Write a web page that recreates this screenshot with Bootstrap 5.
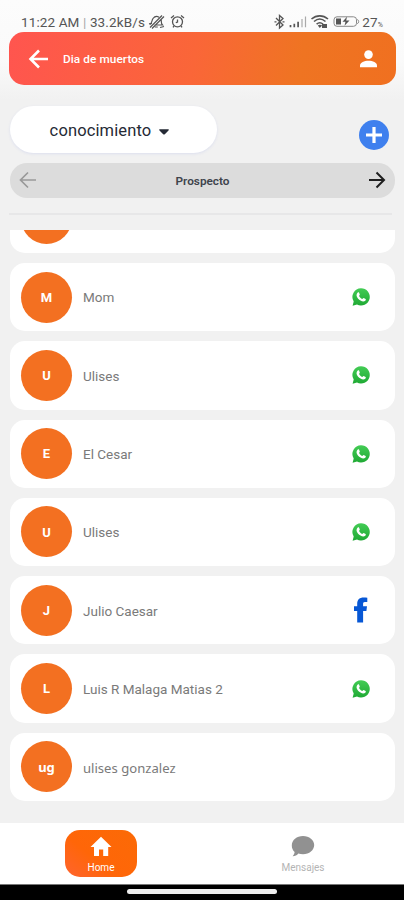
<!DOCTYPE html>
<html lang="es">
<head>
<meta charset="utf-8">
<meta name="viewport" content="width=device-width, initial-scale=1">
<title>Dia de muertos</title>
<link href="https://cdn.jsdelivr.net/npm/bootstrap@5.3.0/dist/css/bootstrap.min.css" rel="stylesheet">
<style>
body{font-family:Roboto,"Liberation Sans",sans-serif;background:#f1f1f1;height:900px;overflow:hidden}
svg{display:block;flex:none}
.phone{width:404px;height:900px}
.top-area{background:linear-gradient(#fcfcfc 0,#fafafa 60px,#f1f1f1 100px)}
.status{height:32px;padding:13px 21px 0;font-size:13.5px;line-height:19px;color:#555}
.status .clock{white-space:nowrap;letter-spacing:.12px}
.battery-text{margin-left:-3px}
.battery-text small{font-size:7px}
.app-head{height:53px;margin:0 8px 0 9px;padding:0 18px 0 17px;border-radius:15px;background:linear-gradient(100deg,#ff554f 0,#fa6638 48%,#ef7422 75%,#f07020 100%);color:#fff}
.app-title{font-size:11.8px;font-weight:500;margin-left:12px;padding-top:2px;letter-spacing:.08px}
.filters{height:78px;padding:21px 15px 0 10px}
.picker{width:207px;height:47px;background:#fff;border:0;border-radius:24px;box-shadow:0 1px 3px #dcdfee;font-size:16.5px;color:#252a35;gap:8px;letter-spacing:.13px}
.add{width:30px;height:30px;margin-top:14px;background:#3f80ee}
.stage{height:35px;margin:0 9px 0 10px;padding:0 9px;border-radius:17px;background:#dcdcdc;font-size:11.8px;font-weight:600;color:#40444c}
.stage span{padding-top:2px}
.rule{height:2px;margin:15px 12px 15px 9px;background:#e7e7e8}
.contacts{height:594px;padding:0 9px 0 10px;gap:10px}
.contact{height:68.3px;flex:none;background:#fff;border-radius:15px;padding:0 25px 0 11px}
.contact.cut{height:23px;border-radius:0 0 15px 15px;overflow:hidden;align-items:flex-end!important;padding-bottom:9px}
.avatar{width:51px;height:51px;flex:none;background:#f37021;color:#fff;font-size:13px;font-weight:700;padding-top:1px}
.who{margin-left:11px;font-size:13.5px;color:#7a7a7a;padding-top:1px}
.noto{font-family:"Noto Sans",sans-serif}
.who.noto{font-size:13.1px;padding-top:3px}
.tabs{height:61px;background:#fff}
.tab{width:72px;height:47px;margin-top:7px;border-radius:15px;font-size:10px;line-height:12px;color:#b4b4b4;padding-top:6px;gap:5px}
.tab.on{background:linear-gradient(40deg,#ff642f,#ff6608 40%,#fb6a06);color:#fff}
.gesture{height:16px;background:#000;border-top:1px solid #777;padding-top:4px}
.pill{width:150px;height:4.5px;background:#eee}
</style>
</head>
<body>
<svg width="0" height="0" aria-hidden="true">
<defs><linearGradient id="wag" x1="0" y1="0" x2="0" y2="1"><stop stop-color="#43cc55"/><stop offset="1" stop-color="#1fa934"/></linearGradient></defs>
<symbol id="wa" viewBox="0 0 18 18"><path fill="url(#wag)" d="M9 .2a8.700 8.700 0 1 1-4 16.400L.6 17.800l1.100-4.400A8.700 8.700 0 0 1 9 .2Z"/><path fill="#fff" d="M5.800 4.400c.4-.4 1-.3 1.200.1l.8 1.900c.1.500-.8 1.200-.7 1.500.7 1.400 1.700 2.400 3.100 3 .4.100 1-1.100 1.500-.9l1.900.9c.4.200.2 1.300-.3 1.800-1.300 1.200-3 .9-4.800-.1-1.800-1.100-3.200-2.600-3.800-4.300-.4-1.500.1-3.100 1.100-3.900Z"/></symbol>
</svg>
<div class="phone d-flex flex-column">
<div class="top-area">
<div class="status d-flex justify-content-between">
<div class="d-flex"><span class="clock">11:22 AM <span class="opacity-50">|</span> 33.2kB/s</span>
<svg width="17" height="17" viewBox="0 -1 17 17" style="margin-left:3px" fill="none" stroke="#555" stroke-width="1.200"><path d="M2 10.500c2-1.500 1.700-4 3-6 1.500-2 4-2.700 6-1.200M13 5c.8 2-.5 4 1.500 6H6.500M6.800 13h3M2 13.500 14 1.500M4 14.500 16 2.500M1 9.800l3-.5M12 13.500l4-1"/></svg>
<svg width="15" height="17" viewBox="0 -1 15 17" style="margin-left:5px" fill="none" stroke="#555" stroke-width="1.300"><circle cx="7.500" cy="7.800" r="5"/><path d="M1 4 4 1.500M14 4l-3-2.500M7.500 5.500V8l-1.700.7M4 12l-1 1.400M11 12l1 1.400"/></svg></div>
<div class="d-flex">
<svg width="91" height="18" viewBox="0 0 91 18" fill="none" stroke="#555"><path stroke-width="1.300" d="m2 5 7 7-3.500 3V2.500L9 5.500l-7 7M.5 8.800h2M8.500 8.800h2"/><path stroke-width="1.700" d="M16.500 12v2.300M20.300 10.700v3.600M24.100 8.700v5.600"/><path stroke="#aaa" stroke-width="1.200" d="M28 6v8.300M31.500 3.500v10.800"/><g stroke-width="1.600"><path d="M37.500 6c5-4.200 11.500-4.200 16.500 0M40 8.500c3.500-3 8-3 11.500 0M42.600 11.100c2-1.700 4.400-1.700 6.400 0"/></g><path fill="#555" stroke="none" d="m43.800 12.500 2 2.500 2.300-2.500c-1.300-1-3-1-4.300 0ZM48 11h5v4h-5Z"/><rect x="60" y="3.800" width="22.500" height="9.500" rx="3" stroke="#888"/><path stroke="#888" d="M83.200 6.500c2 .5 2 3.700 0 4.200"/><path fill="#555" stroke="none" d="M62 5.600h5v6h-5ZM73 3.800l-4.500 5h3l-1 4 5-5.400h-3.300Z"/></svg>
<span class="clock battery-text">27<small>%</small></span></div>
</div>
<header class="app-head d-flex align-items-center">
<svg width="25" height="22" viewBox="0 0 25 22" fill="none" stroke="#fff" stroke-width="2.600"><path d="M22 11H5M13 2.500 4.500 11l8.500 8.500"/></svg>
<span class="app-title">Dia de muertos</span>
<svg class="ms-auto" width="19" height="18" viewBox="0 0 19 18" fill="#fff"><circle cx="9.500" cy="4.600" r="4.300"/><path d="M1 17.300v-1.800c0-6.500 17-6.500 17 0v1.800Z"/></svg>
</header>
<div class="filters d-flex justify-content-between">
<button class="picker d-flex align-items-center justify-content-center pt-1 pb-0 ps-0 pe-2">conocimiento <svg width="10" height="6" viewBox="0 0 10 6"><path fill="#252a35" d="M1 .3h8c.8 0 1 .6.5 1.100L5.800 5.200q-.8.800-1.600 0L.5 1.400C0 .9.200.3 1 .3Z"/></svg></button>
<button class="add border-0 rounded-circle p-0 d-flex align-items-center justify-content-center" aria-label="Agregar"><svg width="16" height="16" stroke="#fff" stroke-width="3.200"><path d="M8 0v16M0 8h16"/></svg></button>
</div></div>
<div class="stage d-flex align-items-center justify-content-between">
<svg width="18" height="18" viewBox="0 0 18 18" fill="none" stroke="#999" stroke-width="1.700"><path d="M17 9H2M9 1.500 1.500 9 9 16.500"/></svg>
<span>Prospecto</span>
<svg width="18" height="18" viewBox="0 0 18 18" fill="none" stroke="#1e1e1e" stroke-width="2"><path d="M1 9h15M8.500 1.500 16 9l-7.500 7.500"/></svg>
</div>
<div class="rule"></div>
<main class="contacts d-flex flex-column">
<div class="contact cut d-flex"><div class="avatar rounded-circle"></div></div>
<div class="contact d-flex align-items-center"><div class="avatar rounded-circle d-flex align-items-center justify-content-center">M</div><span class="who">Mom</span><svg class="ms-auto" width="18" height="18"><use href="#wa"/></svg></div>
<div class="contact d-flex align-items-center"><div class="avatar rounded-circle d-flex align-items-center justify-content-center">U</div><span class="who">Ulises</span><svg class="ms-auto" width="18" height="18"><use href="#wa"/></svg></div>
<div class="contact d-flex align-items-center"><div class="avatar rounded-circle d-flex align-items-center justify-content-center">E</div><span class="who">El Cesar</span><svg class="ms-auto" width="18" height="18"><use href="#wa"/></svg></div>
<div class="contact d-flex align-items-center"><div class="avatar rounded-circle d-flex align-items-center justify-content-center">U</div><span class="who">Ulises</span><svg class="ms-auto" width="18" height="18"><use href="#wa"/></svg></div>
<div class="contact d-flex align-items-center"><div class="avatar rounded-circle d-flex align-items-center justify-content-center">J</div><span class="who">Julio Caesar</span><svg class="ms-auto" width="18" height="26" viewBox="0 0 18 26"><path fill="#0757d5" d="M5.200 25.500V14H2V9.200h3.200V6.600C5.200 2.500 8 .5 11.300.5c1.600 0 3 .1 4 .3v4.100h-2.400c-1.500 0-1.800.8-1.800 2.100v2.200H15l-.6 4.800h-3.300v11.500Z"/></svg></div>
<div class="contact d-flex align-items-center"><div class="avatar rounded-circle d-flex align-items-center justify-content-center">L</div><span class="who">Luis R Malaga Matias 2</span><svg class="ms-auto" width="18" height="18"><use href="#wa"/></svg></div>
<div class="contact d-flex align-items-center"><div class="avatar noto rounded-circle d-flex align-items-center justify-content-center">ug</div><span class="who noto">ulises gonzalez</span></div>
</main>
<nav class="tabs d-flex">
<div class="w-50 d-flex justify-content-center"><div class="tab on d-flex flex-column align-items-center"><svg width="22" height="21" viewBox="0 0 22 21"><path fill="#fff" d="M11 .8 21.500 11h-3.300v9h-5v-6.500H9V20H4v-9H.5Z"/></svg><span>Home</span></div></div>
<div class="w-50 d-flex justify-content-center"><div class="tab d-flex flex-column align-items-center"><svg width="24" height="21" viewBox="0 0 24 21"><path fill="#919191" d="M12 0c6.300 0 11.200 4 11.200 9s-4.900 9.300-11.200 9.300c-1.700 0-3.300-.3-4.700-.8-1.300 1.800-3.200 2.700-5.700 2.800 1.100-1.300 2-2.900 2-4.300C1.800 14.200.8 12 .8 9.400.8 4 5.700 0 12 0Z"/></svg><span>Mensajes</span></div></div>
</nav>
<div class="gesture d-flex justify-content-center"><div class="pill rounded-pill"></div></div>
</div>
<script src="https://cdn.jsdelivr.net/npm/bootstrap@5.3.0/dist/js/bootstrap.bundle.min.js"></script>
</body>
</html>
